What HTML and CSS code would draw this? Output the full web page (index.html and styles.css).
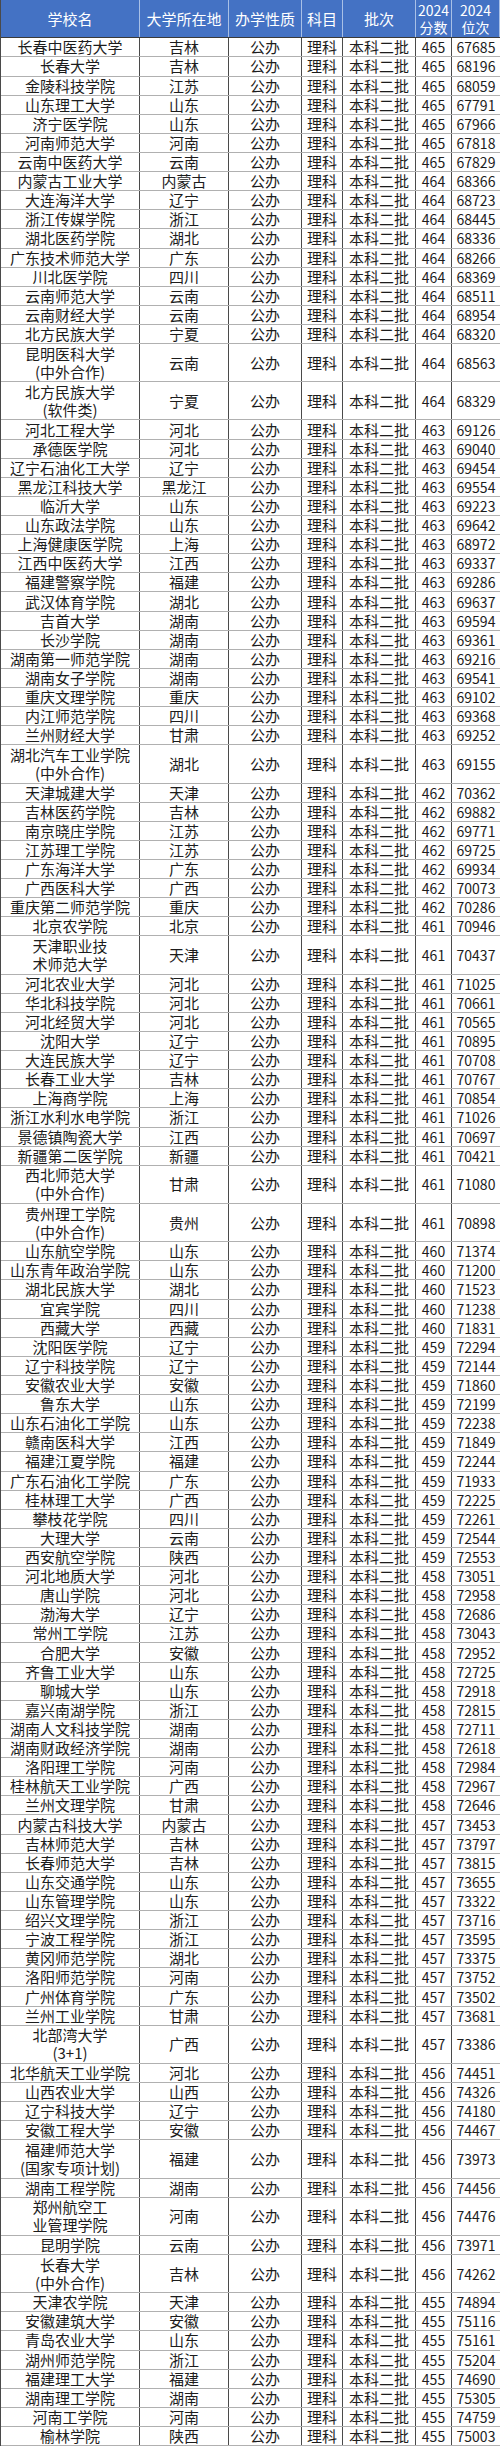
FILE: index.html
```html
<!DOCTYPE html>
<html lang="zh">
<head>
<meta charset="utf-8">
<title>2024 本科二批 理科</title>
<link rel="stylesheet" href="styles.css">
</head>
<body>
<div class="table">
<div class="row head"><div>学校名</div><div>大学所在地</div><div>办学性质</div><div>科目</div><div>批次</div><div class="two">2024<br>分数</div><div class="two">2024<br>位次</div></div>
<div class="row"><div>长春中医药大学</div><div>吉林</div><div>公办</div><div>理科</div><div>本科二批</div><div>465</div><div>67685</div></div>
<div class="row"><div>长春大学</div><div>吉林</div><div>公办</div><div>理科</div><div>本科二批</div><div>465</div><div>68196</div></div>
<div class="row"><div>金陵科技学院</div><div>江苏</div><div>公办</div><div>理科</div><div>本科二批</div><div>465</div><div>68059</div></div>
<div class="row"><div>山东理工大学</div><div>山东</div><div>公办</div><div>理科</div><div>本科二批</div><div>465</div><div>67791</div></div>
<div class="row"><div>济宁医学院</div><div>山东</div><div>公办</div><div>理科</div><div>本科二批</div><div>465</div><div>67966</div></div>
<div class="row"><div>河南师范大学</div><div>河南</div><div>公办</div><div>理科</div><div>本科二批</div><div>465</div><div>67818</div></div>
<div class="row"><div>云南中医药大学</div><div>云南</div><div>公办</div><div>理科</div><div>本科二批</div><div>465</div><div>67829</div></div>
<div class="row"><div>内蒙古工业大学</div><div>内蒙古</div><div>公办</div><div>理科</div><div>本科二批</div><div>464</div><div>68366</div></div>
<div class="row"><div>大连海洋大学</div><div>辽宁</div><div>公办</div><div>理科</div><div>本科二批</div><div>464</div><div>68723</div></div>
<div class="row"><div>浙江传媒学院</div><div>浙江</div><div>公办</div><div>理科</div><div>本科二批</div><div>464</div><div>68445</div></div>
<div class="row"><div>湖北医药学院</div><div>湖北</div><div>公办</div><div>理科</div><div>本科二批</div><div>464</div><div>68336</div></div>
<div class="row"><div>广东技术师范大学</div><div>广东</div><div>公办</div><div>理科</div><div>本科二批</div><div>464</div><div>68266</div></div>
<div class="row"><div>川北医学院</div><div>四川</div><div>公办</div><div>理科</div><div>本科二批</div><div>464</div><div>68369</div></div>
<div class="row"><div>云南师范大学</div><div>云南</div><div>公办</div><div>理科</div><div>本科二批</div><div>464</div><div>68511</div></div>
<div class="row"><div>云南财经大学</div><div>云南</div><div>公办</div><div>理科</div><div>本科二批</div><div>464</div><div>68954</div></div>
<div class="row"><div>北方民族大学</div><div>宁夏</div><div>公办</div><div>理科</div><div>本科二批</div><div>464</div><div>68320</div></div>
<div class="row tall"><div>昆明医科大学<br>(中外合作)</div><div>云南</div><div>公办</div><div>理科</div><div>本科二批</div><div>464</div><div>68563</div></div>
<div class="row tall"><div>北方民族大学<br>(软件类)</div><div>宁夏</div><div>公办</div><div>理科</div><div>本科二批</div><div>464</div><div>68329</div></div>
<div class="row"><div>河北工程大学</div><div>河北</div><div>公办</div><div>理科</div><div>本科二批</div><div>463</div><div>69126</div></div>
<div class="row"><div>承德医学院</div><div>河北</div><div>公办</div><div>理科</div><div>本科二批</div><div>463</div><div>69040</div></div>
<div class="row"><div>辽宁石油化工大学</div><div>辽宁</div><div>公办</div><div>理科</div><div>本科二批</div><div>463</div><div>69454</div></div>
<div class="row"><div>黑龙江科技大学</div><div>黑龙江</div><div>公办</div><div>理科</div><div>本科二批</div><div>463</div><div>69554</div></div>
<div class="row"><div>临沂大学</div><div>山东</div><div>公办</div><div>理科</div><div>本科二批</div><div>463</div><div>69223</div></div>
<div class="row"><div>山东政法学院</div><div>山东</div><div>公办</div><div>理科</div><div>本科二批</div><div>463</div><div>69642</div></div>
<div class="row"><div>上海健康医学院</div><div>上海</div><div>公办</div><div>理科</div><div>本科二批</div><div>463</div><div>68972</div></div>
<div class="row"><div>江西中医药大学</div><div>江西</div><div>公办</div><div>理科</div><div>本科二批</div><div>463</div><div>69337</div></div>
<div class="row"><div>福建警察学院</div><div>福建</div><div>公办</div><div>理科</div><div>本科二批</div><div>463</div><div>69286</div></div>
<div class="row"><div>武汉体育学院</div><div>湖北</div><div>公办</div><div>理科</div><div>本科二批</div><div>463</div><div>69637</div></div>
<div class="row"><div>吉首大学</div><div>湖南</div><div>公办</div><div>理科</div><div>本科二批</div><div>463</div><div>69594</div></div>
<div class="row"><div>长沙学院</div><div>湖南</div><div>公办</div><div>理科</div><div>本科二批</div><div>463</div><div>69361</div></div>
<div class="row"><div>湖南第一师范学院</div><div>湖南</div><div>公办</div><div>理科</div><div>本科二批</div><div>463</div><div>69216</div></div>
<div class="row"><div>湖南女子学院</div><div>湖南</div><div>公办</div><div>理科</div><div>本科二批</div><div>463</div><div>69541</div></div>
<div class="row"><div>重庆文理学院</div><div>重庆</div><div>公办</div><div>理科</div><div>本科二批</div><div>463</div><div>69102</div></div>
<div class="row"><div>内江师范学院</div><div>四川</div><div>公办</div><div>理科</div><div>本科二批</div><div>463</div><div>69368</div></div>
<div class="row"><div>兰州财经大学</div><div>甘肃</div><div>公办</div><div>理科</div><div>本科二批</div><div>463</div><div>69252</div></div>
<div class="row tall"><div>湖北汽车工业学院<br>(中外合作)</div><div>湖北</div><div>公办</div><div>理科</div><div>本科二批</div><div>463</div><div>69155</div></div>
<div class="row"><div>天津城建大学</div><div>天津</div><div>公办</div><div>理科</div><div>本科二批</div><div>462</div><div>70362</div></div>
<div class="row"><div>吉林医药学院</div><div>吉林</div><div>公办</div><div>理科</div><div>本科二批</div><div>462</div><div>69882</div></div>
<div class="row"><div>南京晓庄学院</div><div>江苏</div><div>公办</div><div>理科</div><div>本科二批</div><div>462</div><div>69771</div></div>
<div class="row"><div>江苏理工学院</div><div>江苏</div><div>公办</div><div>理科</div><div>本科二批</div><div>462</div><div>69725</div></div>
<div class="row"><div>广东海洋大学</div><div>广东</div><div>公办</div><div>理科</div><div>本科二批</div><div>462</div><div>69934</div></div>
<div class="row"><div>广西医科大学</div><div>广西</div><div>公办</div><div>理科</div><div>本科二批</div><div>462</div><div>70073</div></div>
<div class="row"><div>重庆第二师范学院</div><div>重庆</div><div>公办</div><div>理科</div><div>本科二批</div><div>462</div><div>70286</div></div>
<div class="row"><div>北京农学院</div><div>北京</div><div>公办</div><div>理科</div><div>本科二批</div><div>461</div><div>70946</div></div>
<div class="row tall"><div>天津职业技<br>术师范大学</div><div>天津</div><div>公办</div><div>理科</div><div>本科二批</div><div>461</div><div>70437</div></div>
<div class="row"><div>河北农业大学</div><div>河北</div><div>公办</div><div>理科</div><div>本科二批</div><div>461</div><div>71025</div></div>
<div class="row"><div>华北科技学院</div><div>河北</div><div>公办</div><div>理科</div><div>本科二批</div><div>461</div><div>70661</div></div>
<div class="row"><div>河北经贸大学</div><div>河北</div><div>公办</div><div>理科</div><div>本科二批</div><div>461</div><div>70565</div></div>
<div class="row"><div>沈阳大学</div><div>辽宁</div><div>公办</div><div>理科</div><div>本科二批</div><div>461</div><div>70895</div></div>
<div class="row"><div>大连民族大学</div><div>辽宁</div><div>公办</div><div>理科</div><div>本科二批</div><div>461</div><div>70708</div></div>
<div class="row"><div>长春工业大学</div><div>吉林</div><div>公办</div><div>理科</div><div>本科二批</div><div>461</div><div>70767</div></div>
<div class="row"><div>上海商学院</div><div>上海</div><div>公办</div><div>理科</div><div>本科二批</div><div>461</div><div>70854</div></div>
<div class="row"><div>浙江水利水电学院</div><div>浙江</div><div>公办</div><div>理科</div><div>本科二批</div><div>461</div><div>71026</div></div>
<div class="row"><div>景德镇陶瓷大学</div><div>江西</div><div>公办</div><div>理科</div><div>本科二批</div><div>461</div><div>70697</div></div>
<div class="row"><div>新疆第二医学院</div><div>新疆</div><div>公办</div><div>理科</div><div>本科二批</div><div>461</div><div>70421</div></div>
<div class="row tall"><div>西北师范大学<br>(中外合作)</div><div>甘肃</div><div>公办</div><div>理科</div><div>本科二批</div><div>461</div><div>71080</div></div>
<div class="row tall"><div>贵州理工学院<br>(中外合作)</div><div>贵州</div><div>公办</div><div>理科</div><div>本科二批</div><div>461</div><div>70898</div></div>
<div class="row"><div>山东航空学院</div><div>山东</div><div>公办</div><div>理科</div><div>本科二批</div><div>460</div><div>71374</div></div>
<div class="row"><div>山东青年政治学院</div><div>山东</div><div>公办</div><div>理科</div><div>本科二批</div><div>460</div><div>71200</div></div>
<div class="row"><div>湖北民族大学</div><div>湖北</div><div>公办</div><div>理科</div><div>本科二批</div><div>460</div><div>71523</div></div>
<div class="row"><div>宜宾学院</div><div>四川</div><div>公办</div><div>理科</div><div>本科二批</div><div>460</div><div>71238</div></div>
<div class="row"><div>西藏大学</div><div>西藏</div><div>公办</div><div>理科</div><div>本科二批</div><div>460</div><div>71831</div></div>
<div class="row"><div>沈阳医学院</div><div>辽宁</div><div>公办</div><div>理科</div><div>本科二批</div><div>459</div><div>72294</div></div>
<div class="row"><div>辽宁科技学院</div><div>辽宁</div><div>公办</div><div>理科</div><div>本科二批</div><div>459</div><div>72144</div></div>
<div class="row"><div>安徽农业大学</div><div>安徽</div><div>公办</div><div>理科</div><div>本科二批</div><div>459</div><div>71860</div></div>
<div class="row"><div>鲁东大学</div><div>山东</div><div>公办</div><div>理科</div><div>本科二批</div><div>459</div><div>72199</div></div>
<div class="row"><div>山东石油化工学院</div><div>山东</div><div>公办</div><div>理科</div><div>本科二批</div><div>459</div><div>72238</div></div>
<div class="row"><div>赣南医科大学</div><div>江西</div><div>公办</div><div>理科</div><div>本科二批</div><div>459</div><div>71849</div></div>
<div class="row"><div>福建江夏学院</div><div>福建</div><div>公办</div><div>理科</div><div>本科二批</div><div>459</div><div>72244</div></div>
<div class="row"><div>广东石油化工学院</div><div>广东</div><div>公办</div><div>理科</div><div>本科二批</div><div>459</div><div>71933</div></div>
<div class="row"><div>桂林理工大学</div><div>广西</div><div>公办</div><div>理科</div><div>本科二批</div><div>459</div><div>72225</div></div>
<div class="row"><div>攀枝花学院</div><div>四川</div><div>公办</div><div>理科</div><div>本科二批</div><div>459</div><div>72261</div></div>
<div class="row"><div>大理大学</div><div>云南</div><div>公办</div><div>理科</div><div>本科二批</div><div>459</div><div>72544</div></div>
<div class="row"><div>西安航空学院</div><div>陕西</div><div>公办</div><div>理科</div><div>本科二批</div><div>459</div><div>72553</div></div>
<div class="row"><div>河北地质大学</div><div>河北</div><div>公办</div><div>理科</div><div>本科二批</div><div>458</div><div>73051</div></div>
<div class="row"><div>唐山学院</div><div>河北</div><div>公办</div><div>理科</div><div>本科二批</div><div>458</div><div>72958</div></div>
<div class="row"><div>渤海大学</div><div>辽宁</div><div>公办</div><div>理科</div><div>本科二批</div><div>458</div><div>72686</div></div>
<div class="row"><div>常州工学院</div><div>江苏</div><div>公办</div><div>理科</div><div>本科二批</div><div>458</div><div>73043</div></div>
<div class="row"><div>合肥大学</div><div>安徽</div><div>公办</div><div>理科</div><div>本科二批</div><div>458</div><div>72952</div></div>
<div class="row"><div>齐鲁工业大学</div><div>山东</div><div>公办</div><div>理科</div><div>本科二批</div><div>458</div><div>72725</div></div>
<div class="row"><div>聊城大学</div><div>山东</div><div>公办</div><div>理科</div><div>本科二批</div><div>458</div><div>72918</div></div>
<div class="row"><div>嘉兴南湖学院</div><div>浙江</div><div>公办</div><div>理科</div><div>本科二批</div><div>458</div><div>72815</div></div>
<div class="row"><div>湖南人文科技学院</div><div>湖南</div><div>公办</div><div>理科</div><div>本科二批</div><div>458</div><div>72711</div></div>
<div class="row"><div>湖南财政经济学院</div><div>湖南</div><div>公办</div><div>理科</div><div>本科二批</div><div>458</div><div>72618</div></div>
<div class="row"><div>洛阳理工学院</div><div>河南</div><div>公办</div><div>理科</div><div>本科二批</div><div>458</div><div>72984</div></div>
<div class="row"><div>桂林航天工业学院</div><div>广西</div><div>公办</div><div>理科</div><div>本科二批</div><div>458</div><div>72967</div></div>
<div class="row"><div>兰州文理学院</div><div>甘肃</div><div>公办</div><div>理科</div><div>本科二批</div><div>458</div><div>72646</div></div>
<div class="row"><div>内蒙古科技大学</div><div>内蒙古</div><div>公办</div><div>理科</div><div>本科二批</div><div>457</div><div>73453</div></div>
<div class="row"><div>吉林师范大学</div><div>吉林</div><div>公办</div><div>理科</div><div>本科二批</div><div>457</div><div>73797</div></div>
<div class="row"><div>长春师范大学</div><div>吉林</div><div>公办</div><div>理科</div><div>本科二批</div><div>457</div><div>73815</div></div>
<div class="row"><div>山东交通学院</div><div>山东</div><div>公办</div><div>理科</div><div>本科二批</div><div>457</div><div>73655</div></div>
<div class="row"><div>山东管理学院</div><div>山东</div><div>公办</div><div>理科</div><div>本科二批</div><div>457</div><div>73322</div></div>
<div class="row"><div>绍兴文理学院</div><div>浙江</div><div>公办</div><div>理科</div><div>本科二批</div><div>457</div><div>73716</div></div>
<div class="row"><div>宁波工程学院</div><div>浙江</div><div>公办</div><div>理科</div><div>本科二批</div><div>457</div><div>73595</div></div>
<div class="row"><div>黄冈师范学院</div><div>湖北</div><div>公办</div><div>理科</div><div>本科二批</div><div>457</div><div>73375</div></div>
<div class="row"><div>洛阳师范学院</div><div>河南</div><div>公办</div><div>理科</div><div>本科二批</div><div>457</div><div>73752</div></div>
<div class="row"><div>广州体育学院</div><div>广东</div><div>公办</div><div>理科</div><div>本科二批</div><div>457</div><div>73502</div></div>
<div class="row"><div>兰州工业学院</div><div>甘肃</div><div>公办</div><div>理科</div><div>本科二批</div><div>457</div><div>73681</div></div>
<div class="row tall"><div>北部湾大学<br>(3+1)</div><div>广西</div><div>公办</div><div>理科</div><div>本科二批</div><div>457</div><div>73386</div></div>
<div class="row"><div>北华航天工业学院</div><div>河北</div><div>公办</div><div>理科</div><div>本科二批</div><div>456</div><div>74451</div></div>
<div class="row"><div>山西农业大学</div><div>山西</div><div>公办</div><div>理科</div><div>本科二批</div><div>456</div><div>74326</div></div>
<div class="row"><div>辽宁科技大学</div><div>辽宁</div><div>公办</div><div>理科</div><div>本科二批</div><div>456</div><div>74180</div></div>
<div class="row"><div>安徽工程大学</div><div>安徽</div><div>公办</div><div>理科</div><div>本科二批</div><div>456</div><div>74467</div></div>
<div class="row tall"><div>福建师范大学<br>(国家专项计划)</div><div>福建</div><div>公办</div><div>理科</div><div>本科二批</div><div>456</div><div>73973</div></div>
<div class="row"><div>湖南工程学院</div><div>湖南</div><div>公办</div><div>理科</div><div>本科二批</div><div>456</div><div>74456</div></div>
<div class="row tall"><div>郑州航空工<br>业管理学院</div><div>河南</div><div>公办</div><div>理科</div><div>本科二批</div><div>456</div><div>74476</div></div>
<div class="row"><div>昆明学院</div><div>云南</div><div>公办</div><div>理科</div><div>本科二批</div><div>456</div><div>73971</div></div>
<div class="row tall"><div>长春大学<br>(中外合作)</div><div>吉林</div><div>公办</div><div>理科</div><div>本科二批</div><div>456</div><div>74262</div></div>
<div class="row"><div>天津农学院</div><div>天津</div><div>公办</div><div>理科</div><div>本科二批</div><div>455</div><div>74894</div></div>
<div class="row"><div>安徽建筑大学</div><div>安徽</div><div>公办</div><div>理科</div><div>本科二批</div><div>455</div><div>75116</div></div>
<div class="row"><div>青岛农业大学</div><div>山东</div><div>公办</div><div>理科</div><div>本科二批</div><div>455</div><div>75161</div></div>
<div class="row"><div>湖州师范学院</div><div>浙江</div><div>公办</div><div>理科</div><div>本科二批</div><div>455</div><div>75204</div></div>
<div class="row"><div>福建理工大学</div><div>福建</div><div>公办</div><div>理科</div><div>本科二批</div><div>455</div><div>74690</div></div>
<div class="row"><div>湖南理工学院</div><div>湖南</div><div>公办</div><div>理科</div><div>本科二批</div><div>455</div><div>75305</div></div>
<div class="row"><div>河南工学院</div><div>河南</div><div>公办</div><div>理科</div><div>本科二批</div><div>455</div><div>74759</div></div>
<div class="row"><div>榆林学院</div><div>陕西</div><div>公办</div><div>理科</div><div>本科二批</div><div>455</div><div>75003</div></div>
</div>
</body>
</html>
```

FILE: styles.css
```css
html, body {
  margin: 0;
  padding: 0;
  background: #ffffff;
}

body {
  width: 500px;
  font-family: "Noto Sans CJK SC", "Noto Sans", sans-serif;
  color: #1c1c1c;
}

.table {
  width: 500px;
  border-left: 1px solid #4a4a4a;
  box-sizing: border-box;
}

.row {
  display: grid;
  grid-template-columns: 139px 89px 73px 41px 73px 36px 48px;
  height: 19.11px;
  box-sizing: border-box;
  border-bottom: 1px solid #b0b0b0;
}

.row.tall {
  height: 38.22px;
}

.row > div {
  display: flex;
  align-items: center;
  justify-content: center;
  text-align: center;
  font-size: 15px;
  line-height: 18px;
  border-right: 1px solid #4a4a4a;
  white-space: nowrap;
}

.row > div:nth-child(6),
.row > div:nth-child(7) {
  font-size: 14px;
}

.row > div:last-child {
  border-right: none;
}

.row.head {
  height: 38.3px;
  background: #4472c4;
  color: #ffffff;
  border-bottom: 1px solid #3a3a3a;
}

.row.head > div {
  border-right: 1px solid #a9c0e6;
  font-size: 15px;
}

.row.head > div.two {
  font-size: 14px;
  line-height: 17px;
}
```
